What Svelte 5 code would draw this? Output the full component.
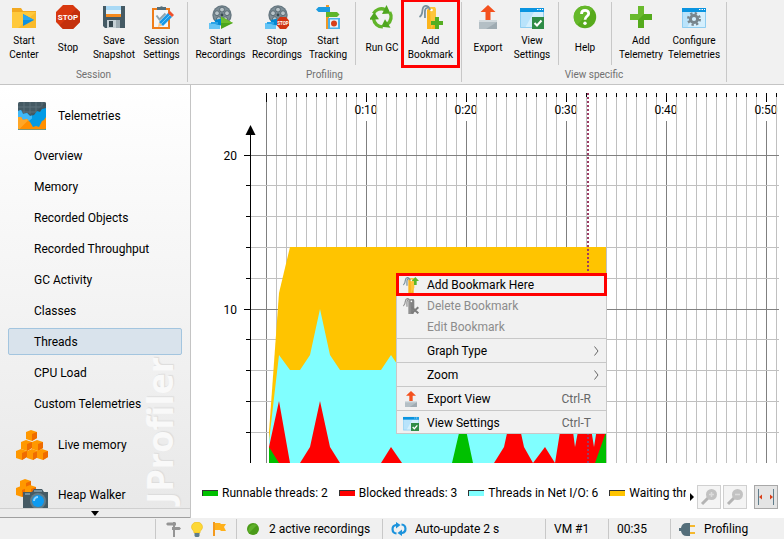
<script>
  const groups = [
    {
      label: 'Session',
      sets: [[
        { icon: 'folder', lines: ['Start', 'Center'], w: 48 },
        { icon: 'stop', lines: ['Stop'], w: 40 },
        { icon: 'save', lines: ['Save', 'Snapshot'], w: 52 },
        { icon: 'clipboard', lines: ['Session', 'Settings'], w: 43 },
      ]],
    },
    {
      label: 'Profiling',
      sets: [
        [
          { icon: 'reelplay', lines: ['Start', 'Recordings'], w: 57 },
          { icon: 'reelstop', lines: ['Stop', 'Recordings'], w: 56 },
          { icon: 'track', lines: ['Start', 'Tracking'], w: 46 },
        ],
        [
          { icon: 'recycle', lines: ['Run GC'], w: 44 },
          { icon: 'bookmark', lines: ['Add', 'Bookmark'], w: 53, marked: true },
        ],
      ],
    },
    {
      label: 'View specific',
      sets: [
        [
          { icon: 'export', lines: ['Export'], w: 44 },
          { icon: 'viewset', lines: ['View', 'Settings'], w: 44 },
        ],
        [{ icon: 'help', lines: ['Help'], w: 44 }],
        [
          { icon: 'plus', lines: ['Add', 'Telemetry'], w: 50 },
          { icon: 'config', lines: ['Configure', 'Telemetries'], w: 56 },
        ],
      ],
    },
  ];

  const views = ['Overview', 'Memory', 'Recorded Objects', 'Recorded Throughput', 'GC Activity', 'Classes', 'Threads', 'CPU Load', 'Custom Telemetries'];
  let selected = $state('Threads');

  const menu = [
    { label: 'Add Bookmark Here', icon: 'bookmarkup', marked: true },
    { label: 'Delete Bookmark', icon: 'bookmarkdel', disabled: true },
    { label: 'Edit Bookmark', disabled: true },
    { label: 'Graph Type', sub: true, sep: true },
    { label: 'Zoom', sub: true, sep: true },
    { label: 'Export View', icon: 'export', key: 'Ctrl-R', sep: true },
    { label: 'View Settings', icon: 'viewset', key: 'Ctrl-T', sep: true },
  ];

  const legend = [
    { label: 'Runnable threads: 2', color: '#00c000' },
    { label: 'Blocked threads: 3', color: '#ff0000' },
    { label: 'Threads in Net I/O: 6', color: '#80ffff' },
    { label: 'Waiting threads: 3', color: '#ffc400' },
  ];

  // Chart scale: ten pixels for each second, 15.4 pixels for each thread
  const originX = 75;
  const baseY = 378;
  let mainWidth = $state(593);
  const px = (s) => originX + s * 10;
  const py = (v) => Math.floor(baseY - v * 15.4);
  const seconds = $derived(Array.from({ length: Math.max(0, Math.floor((mainWidth - 5 - originX) / 10)) + 1 }, (_, i) => i));
  const levels = Array.from({ length: 10 }, (_, i) => (i + 1) * 2);
  const time = (s) => `${Math.floor(s / 60)}:${String(s % 60).padStart(2, '0')}`;
  const area = (pts) => `78,${baseY} ` + pts.map(([x, v]) => `${x},${py(v)}`).join(' ') + ` ${pts[pts.length - 1][0]},${baseY}`;

  const waiting = area([[78, 2], [88, 11], [99, 14], [415, 14]]);
  const netio = area([[78, 1.4], [88, 7], [99, 6], [109, 6], [119, 7], [129, 10], [139, 7], [149, 6], [190, 6], [200, 7], [210, 6], [415, 6]]);
  const blocked = area([[78, 1], [88, 4], [99, 0], [109, 0], [119, 1], [129, 4], [139, 1], [149, 0], [190, 0], [200, 1], [211, 0], [303, 0], [313, 1], [323, 4], [333, 1], [342, 0], [354, 1], [364, 0], [374, 4], [380, 3], [384, 1], [390, 3], [398, 3], [403, 1], [408, 3], [415, 5]]);
  const runnable = area([[78, 1], [88, 0], [261, 0], [272, 3], [282, 0], [404, 0], [415, 2]]);
</script>

{#snippet reel()}
  <circle cx="13" cy="10" r="9.7" fill="#667780" />
  <circle cx="13" cy="10" r="8.4" fill="#7c8d96" />
  {#each [[13, 4.6], [18, 8.2], [16.2, 14.2], [9.8, 14.2], [8, 8.2]] as [x, y]}
    <circle cx={x} cy={y} r="2.4" fill="#b9c4c9" stroke="#4d5d66" stroke-width=".8" />
  {/each}
  <circle cx="13" cy="10" r="1.4" fill="#37474f" />
  <path d="M0 18h11v6H0z" fill="#64c4f5" />
  <path d="M6 15l6-1.500v7L6 19z" fill="#0288d1" />
  <path d="M2 17h7v2H2z" fill="#29a4e8" />
{/snippet}

{#snippet win()}
  <path d="M0 3h24v20H0z" fill="#b9e3fb" />
  <path d="M14 7h10v16H5z" fill="#d5effd" />
  <path d="M.5 3.500h23v19H.5z" fill="none" stroke="#8fcdf0" />
  <path d="M0 3h24v4H0z" fill="#0a94e0" />
  <path d="M17 4.500h1.500M19.500 4.500H21M22 4.500h1" stroke="#fff" />
{/snippet}

{#snippet rings(c)}
  <path d="M11 5C9-1 4 0 3.500 5 3.300 9 2 11 .5 12M9 3C5 2 6 8 6 13" fill="none" stroke={c} stroke-width="1.800" />
{/snippet}

{#snippet icon(name, size)}
  <svg width={size} height={size} viewBox="0 0 24 24" aria-hidden="true">
    {#if name === 'folder'}
      <path d="M0 3h9l2 3h13v17H0z" fill="#f2a921" />
      <path d="M0 7h24v16H0z" fill="#ffc93c" />
      <path d="M24 7v16H6z" fill="#f9ba2b" />
      <path d="M11 9v12l11-6z" fill="#0d90df" />
      <path d="M11 9v6h11z" fill="#2aa6ee" />
    {:else if name === 'stop'}
      <path d="M7 0h10l7 7v10l-7 7H7l-7-7V7z" fill="#d8380f" />
      <path d="M24 7v10l-7 7H7l-3.500-3.500L20.500 3.500z" fill="#c4300c" />
      <text x="12" y="15" text-anchor="middle" font-size="8" font-weight="700" fill="#fff">STOP</text>
    {:else if name === 'save'}
      <path d="M1 1h22v22H3l-2-2z" fill="#455a64" />
      <path d="M4 1h15v11H4z" fill="#e2f2fb" />
      <path d="M4 1h15v4H4z" fill="#a9d9f5" />
      <path d="M4 9h15v3H4z" fill="#f58a1f" />
      <path d="M5 15h13v8H5z" fill="#c6d0d5" />
      <path d="M7 16h4v6H7z" fill="#37474f" />
      <path d="M14 15h4v8h-4z" fill="#9daab1" />
    {:else if name === 'clipboard'}
      <path d="M2 3h18v21H2z" fill="#ef7d1a" />
      <path d="M4 5h14v17H4z" fill="#f4f6f8" />
      <path d="M7 5V2h3a2 2 0 0 1 3 0h3v3z" fill="#546e7a" />
      <path d="M6.500 10.500l3 4 6-6" fill="none" stroke="#90a4ae" stroke-width="2" />
      <path d="M8 22l1-5 3.500 3.500z" fill="#f5c890" />
      <path d="M9 17L18 8l4 4-9 9z" fill="#1a98e5" />
      <path d="M18 8l2-2 4 4-2 2z" fill="#f0512c" />
      <path d="M11 19l9-9" stroke="#6cc5f7" />
    {:else if name === 'reelplay'}
      {@render reel()}
      <path d="M12 11.500v12.500l12-6z" fill="#4ca51b" />
      <path d="M12 11.500V18h12z" fill="#6bbd2c" />
    {:else if name === 'reelstop'}
      {@render reel()}
      <path d="M15 12h6l3 3.500v5L21 24h-6l-3-3.500v-5z" fill="#d03412" />
      <text x="18" y="20" text-anchor="middle" font-size="4.500" font-weight="700" fill="#fff">STOP</text>
    {:else if name === 'track'}
      <path d="M10 0h3v24h-3z" fill="#f09a25" />
      <path d="M0 4.500L2.500 2H14v5H2.500z" fill="#1c9be0" />
      <path d="M10 7h11l2.500 2.500L21 12H10z" fill="#5fb52a" />
      <path d="M12 13h12v11H12z" fill="#4ab2ea" />
      <path d="M14 14.500h8v8h-8z" fill="#e8f4fb" />
      <circle cx="18" cy="18.500" r="3" fill="#d9401b" />
    {:else if name === 'recycle'}
      {#each [0, 120, 240] as turn}
        <g transform="rotate({turn} 12 12.500)">
          <path d="M3.500 8.500A9 9 0 0 1 15 4.500" fill="none" stroke="#62b52a" stroke-width="3.400" />
          <path d="M16.500 0l4 8.500-8.500.5z" fill="#4fa61f" />
        </g>
      {/each}
    {:else if name === 'bookmark' || name === 'bookmarkup' || name === 'bookmarkdel'}
      {@const gray = name === 'bookmarkdel'}
      <path d="M8 5l3-3h5v22H8z" fill={gray ? '#909090' : '#fbb41c'} />
      <path d="M11 2h5l1 2v12l-5 8z" fill={gray ? '#828282' : '#fdc63c'} />
      <circle cx="12.500" cy="5" r="1.300" fill="#fff" />
      {@render rings(gray ? '#909090' : '#78909c')}
      {#if name === 'bookmark'}
        <path d="M16 12h4v4h4v4h-4v4h-4v-4h-4v-4h4z" fill="#55ae22" />
      {:else if name === 'bookmarkup'}
        <path d="M18.500 0L24 6h-3.500v6h-4V6H13z" fill="#5cb82a" />
      {:else}
        <path d="M13 14l10 9M23 14l-10 9" stroke="#7c7c7c" stroke-width="3" />
      {/if}
    {:else if name === 'export'}
      <path d="M3 15h18v9H3z" fill="#b4bfc5" />
      <path d="M3 15h18v2H3z" fill="#d4dbdf" />
      <path d="M21 17v7H10z" fill="#9fabb2" />
      <path d="M12 0l7.500 7H14.500v8h-5V7H4.500z" fill="#f4511e" />
    {:else if name === 'viewset'}
      {@render win()}
      <path d="M12 12h12v12H12z" fill="#2f8c46" />
      <path d="M14.500 18l2.500 2.500 4.500-5" fill="none" stroke="#fff" stroke-width="2" />
    {:else if name === 'config'}
      {@render win()}
      <g fill="none" stroke="#78858c">
        <circle cx="12" cy="14" r="5.800" stroke-width="2.400" stroke-dasharray="2.280" />
        <circle cx="12" cy="14" r="3.600" stroke-width="3" />
      </g>
    {:else if name === 'help'}
      <circle cx="12" cy="12" r="11.200" fill="#57aa1c" />
      <path d="M4 4a11.200 11.200 0 0 0 0 16L20 4A11.200 11.200 0 0 0 4 4z" fill="#65b82a" />
      <path d="M8.500 9c0-5 7.200-4.500 7.200-.5 0 2.800-3.700 2.800-3.700 6.300" fill="none" stroke="#fff" stroke-width="2.800" />
      <circle cx="12" cy="18.300" r="1.700" fill="#fff" />
    {:else if name === 'plus'}
      <path d="M9 1h6v8h8v6h-8v8H9v-8H1V9h8z" fill="#54aa1c" />
      <path d="M9 1h6v8l-6 6H1V9h8z" fill="#6aba2d" />
    {/if}
  </svg>
{/snippet}

{#snippet cube(x, y)}
  <path d="M{x} {y + 2}l5-2 6 2v6l-5 3-6-2z" fill="#ff9800" />
  <path d="M{x + 6} {y + 4}l5-2v6l-5 3z" fill="#ef6c00" />
{/snippet}

<div class="app">
  <header class="toolbar">
    {#each groups as group}
      <section class="group">
        <div class="sets">
          {#each group.sets as set}
            <div class="set">
              {#each set as tool}
                <button class="tool" class:marked={tool.marked} style="width: {tool.w}px">
                  {@render icon(tool.icon, 24)}
                  <span class="caption">{#each tool.lines as line}<span>{line}</span>{' '}{/each}</span>
                </button>
              {/each}
            </div>
          {/each}
        </div>
        <div class="group-label">{group.label}</div>
      </section>
    {/each}
  </header>

  <div class="body">
    <nav class="sidebar">
      <div class="scroll">
        <div class="watermark" aria-hidden="true">JProfiler</div>
        <a class="section" href="#telemetries">
          <svg width="32" height="30" viewBox="0 0 32 30" aria-hidden="true">
            <rect x="2" y="1" width="28" height="28" rx="1.500" fill="#455a64" />
            <path d="M2 6h28M2 11h28M8 1v12M14 1v12M20 1v12M26 1v12" stroke="#5c717b" />
            <path d="M30 1v14H16z" fill="#37474f" opacity=".5" />
            <path d="M2 10l3-1 2 4 4-1 3 3 4-1 3-4 3 1 2-3 4-1v22H2z" fill="#039be5" />
            <path d="M2 10l3-1 2 4 4-1 3 3 2-.5v3L8 24l-6 2z" fill="#40b8f7" />
            <path d="M2 16l3 0 2 3 4-1 3 3 3 5 3-1 3 1 3-6 2-1 2-3v11a1.500 1.500 0 0 1-1.500 1.500h-25A1.500 1.500 0 0 1 2 27.500z" fill="#ff8f00" />
            <path d="M2 16l3 0 2 3 4-1 1 1.500L3 28.500 2 27.500z" fill="#ffa726" />
          </svg>
          Telemetries
        </a>
        {#each views as view}
          <button class="view" class:selected={selected === view} onclick={() => (selected = view)}>{view}</button>
        {/each}
        <a class="section" href="#memory">
          <svg width="32" height="30" viewBox="0 0 32 30" aria-hidden="true">
            {@render cube(10, 0)}
            {@render cube(5, 10)}
            {@render cube(16, 10)}
            {@render cube(0, 19)}
            {@render cube(11, 19)}
            {@render cube(21, 19)}
          </svg>
          Live memory
        </a>
        <a class="section" href="#heap">
          <svg width="32" height="32" viewBox="0 0 32 32" aria-hidden="true">
            {@render cube(4, 0)}
            {@render cube(0, 7)}
            {@render cube(9, 6)}
            <path d="M7 13h9l2-3h8l2 3h4v19H7z" fill="#455a64" />
            <path d="M18 11h8v2h-8zM9 14h5v2H9z" fill="#78909c" />
            <circle cx="22" cy="22" r="8" fill="#607d8b" />
            <circle cx="22" cy="22" r="6" fill="#0d9af0" />
            <path d="M18 22a4 4 0 0 1 4-4" fill="none" stroke="#8fd4ff" stroke-width="2" />
          </svg>
          Heap Walker
        </a>
      </div>
      <button class="more" aria-label="Scroll down">
        <svg width="8" height="5" viewBox="0 0 8 5"><path d="M0 0h8L4 5z" /></svg>
      </button>
    </nav>

    <main bind:clientWidth={mainWidth}>
      <svg class="chart" role="img" aria-label="Threads over time">
        {#each seconds as s}
          {@const major = s % 10 === 0}
          <line x1={px(s) + 0.5} x2={px(s) + 0.5} y1={major && s > 0 ? 36 : 12} y2={baseY} stroke={major ? '#808080' : '#c0c0c0'} />
          <line x1={px(s) + 0.5} x2={px(s) + 0.5} y1="8" y2={major ? 17 : 12} stroke="#000" />
          {#if major && s > 0}
            <text x={px(s)} y="29" text-anchor="middle">{time(s)}</text>
          {/if}
        {/each}
        {#each levels as v}
          {@const major = v % 10 === 0}
          {#if v <= 20}
            <line x1="59" x2="100%" y1={py(v) + 0.5} y2={py(v) + 0.5} stroke={major ? '#808080' : '#c0c0c0'} />
            <line x1={major ? 53 : 55} x2="59" y1={py(v) + 0.5} y2={py(v) + 0.5} stroke="#000" />
            {#if major}
              <text x="46" y={py(v) + 5} text-anchor="end">{v}</text>
            {/if}
          {/if}
        {/each}
        <line x1="59.5" x2="59.5" y1="48" y2={baseY} stroke="#000" />
        <path d="M54.500 50l5-10 5 10z" />
        <polygon points={waiting} fill="#ffc400" />
        <polygon points={netio} fill="#80ffff" />
        <polygon points={blocked} fill="#ff0000" />
        <polygon points={runnable} fill="#00c000" />
        <line x1="397" x2="397" y1="8" y2={baseY} stroke="#9c3c64" stroke-width="2" stroke-dasharray="2 2" />
      </svg>

      <div class="menu" role="menu">
        {#each menu as item}
          {#if item.sep}<hr />{/if}
          <button role="menuitem" class:marked={item.marked} disabled={item.disabled}>
            <span class="slot">{#if item.icon}{@render icon(item.icon, 16)}{/if}</span>
            <span class="name">{item.label}</span>
            {#if item.key}<span class="key">{item.key}</span>{/if}
            {#if item.sub}
              <svg width="5" height="10" viewBox="0 0 5 10" aria-hidden="true"><path d="M.5 .5L4 5 .5 9.500" fill="none" stroke="#666" /></svg>
            {/if}
          </button>
        {/each}
      </div>

      <div class="legend">
        <div class="entries">
          {#each legend as entry}
            <span class="entry"><i style="background: {entry.color}"></i>{entry.label}</span>
          {/each}
        </div>
        <svg class="next" width="4" height="8" viewBox="0 0 4 8" aria-hidden="true"><path d="M0 0l4 4-4 4z" /></svg>
        <div class="zoom">
          {#each ['in', 'out'] as dir}
            <button disabled aria-label="Zoom {dir}">
              <svg width="18" height="18" viewBox="0 0 18 18">
                <path d="M2 16l7-7" stroke="#b4b4b4" stroke-width="3" />
                <circle cx="11.500" cy="6.500" r="5.500" fill="#c2c2c2" />
                <path d={dir === 'in' ? 'M9 6.500h5M11.500 4v5' : 'M9 6.500h5'} stroke="#dcdcdc" stroke-width="1.500" />
              </svg>
            </button>
          {/each}
        </div>
        <button class="fit" aria-label="Fit to window">
          <svg width="18" height="16" viewBox="0 0 18 16">
            <path d="M1.500 0v16M16.500 0v16" stroke="#607d8b" />
            <path d="M2 8l3-2.500v5zM16 8l-3-2.500v5z" fill="#d9401b" />
          </svg>
        </button>
      </div>
    </main>
  </div>

  <footer class="status">
    <div></div>
    <div class="icons">
      <svg width="15" height="15" viewBox="0 0 15 15" aria-hidden="true"><path d="M7 0h2v15H7zM0 2l1.500-1.500H10v3H1.500zM6 5h7.500L15 6.500 13.500 8H6z" fill="#949494" /></svg>
      <svg width="12" height="15" viewBox="0 0 12 15" aria-hidden="true"><path d="M3 11C3 8 .5 8 .5 5a5.500 5 0 0 1 11 0c0 3-2.500 3-2.500 6z" fill="#fdd835" stroke="#eab308" stroke-width=".5" /><path d="M3.500 11h5v3l-1 1h-3l-1-1z" fill="#607d8b" /></svg>
      <svg width="14" height="14" viewBox="0 0 14 14" aria-hidden="true"><path d="M0 0h2v14H0z" fill="#f39a1e" /><path d="M2 1h5l1 1h5l-2 3 2 4H8L7 8H2z" fill="#ffb11b" /></svg>
    </div>
    <div>
      <svg width="12" height="12" viewBox="0 0 12 12" aria-hidden="true"><circle cx="6" cy="6" r="6" fill="#4a9a18" /><path d="M2 10A6 6 0 0 1 10 2z" fill="#5fb02a" /></svg>
      <span class="first">2 active recordings</span>
    </div>
    <div class="tight">
      <svg width="16" height="14" viewBox="0 0 16 14" aria-hidden="true">
        <path d="M5.500 11.500A4.300 4.300 0 0 1 5 3h1M10.500 2.500A4.300 4.300 0 0 1 11 11h-1" fill="none" stroke="#1c93dc" stroke-width="2.200" />
        <path d="M5 0l4.500 3L5 6.500zM11 7.500L6.500 11l4.500 3z" fill="#1c93dc" />
      </svg>
      <span>Auto-update 2 s</span>
    </div>
    <div class="tight"><span>VM #1</span></div>
    <div class="tight"><span>00:35</span></div>
    <div class="tight">
      <svg width="17" height="13" viewBox="0 0 17 13" aria-hidden="true"><path d="M0 5h2a6 6 0 0 1 6-5h3v13H8a6 6 0 0 1-6-5H0z" fill="#546e7a" /><path d="M11 3h5M11 10h5" stroke="#f5b82e" stroke-width="2" /></svg>
      <span>Profiling</span>
    </div>
  </footer>
</div>

<style>
  :global(body) { margin: 0; }
  .app {
    display: flex;
    flex-direction: column;
    height: 100vh;
    overflow: hidden;
    background: #f0f0f0;
    color: #000;
    font: 12px/16px Roboto, "Open Sans", sans-serif;
  }
  button {
    margin: 0;
    padding: 0;
    border: 0;
    background: none;
    color: inherit;
    font: inherit;
  }
  svg { display: block; flex: none; }

  .toolbar {
    display: flex;
    flex: none;
    padding: 2px 0;
    border-bottom: 1px solid #c4c4c4;
    background: #f1f1f1;
  }
  .group { border-right: 1px solid #c8c8c8; }
  .sets, .set { display: flex; }
  .set { padding: 0 4px; height: 63px; }
  .group:first-child .set { padding-left: 0; }
  .set + .set { border-left: 1px solid #c8c8c8; }
  .tool {
    display: flex;
    flex-direction: column;
    align-items: center;
    gap: 5px;
    padding-top: 3px;
    white-space: nowrap;
    font-size: 10px;
    line-height: 14px;
  }
  .caption {
    display: flex;
    flex-direction: column;
    justify-content: center;
    align-items: center;
    height: 28px;
  }
  .tool.marked { outline: 3px solid #f00; }
  .group-label {
    height: 17px;
    line-height: 20px;
    font-size: 10px;
    color: #707070;
    text-align: center;
  }

  .body { display: flex; flex: 1; min-height: 0; }
  .sidebar {
    display: flex;
    flex-direction: column;
    width: 190px;
    flex: none;
    border-right: 1px solid #c4c4c4;
    background: linear-gradient(#fff, #e8e8e8);
  }
  .scroll {
    position: relative;
    flex: 1;
    min-height: 0;
    overflow: hidden;
    padding: 5px 8px 0;
  }
  .watermark {
    position: absolute;
    right: 6px;
    bottom: 4px;
    writing-mode: vertical-rl;
    transform: rotate(180deg);
    font-family: "Open Sans", sans-serif;
    font-size: 36px;
    line-height: 48px;
    font-weight: 700;
    color: #f9f9f9;
    text-shadow: 1px 1px 1px #dcdcdc;
  }
  .section {
    position: relative;
    display: flex;
    align-items: center;
    gap: 10px;
    box-sizing: border-box;
    height: 50px;
    padding: 2px 0 0 8px;
    color: inherit;
    text-decoration: none;
  }
  .view {
    position: relative;
    display: block;
    box-sizing: border-box;
    width: 100%;
    height: 27px;
    margin: 0 0 4px;
    padding-left: 25px;
    border: 1px solid transparent;
    border-radius: 2px;
    text-align: left;
  }
  .section + .view { margin-top: 2px; }
  .view:nth-last-of-type(1) { margin-bottom: 2px; }
  .view.selected { border-color: #a3c5df; background: #d9e3ec; }
  .more {
    display: flex;
    justify-content: center;
    align-items: center;
    height: 10px;
    border-top: 1px solid #d0d0d0;
    border-bottom: 1px solid #a0a0a0;
    background: #ececec;
  }

  main {
    position: relative;
    display: flex;
    flex-direction: column;
    flex: 1;
    min-width: 0;
    padding-right: 5px;
    background: #fff;
  }
  .chart { width: 100%; height: 378px; overflow: visible; }
  .chart text { font-size: 12px; }

  .menu {
    position: absolute;
    left: 205px;
    top: 188px;
    width: 209px;
    border: 1px solid #c8c8c8;
    background: #f1f1f1;
  }
  .menu hr { margin: 1px 0; border: 0; border-top: 1px solid #c8c8c8; }
  .menu button {
    display: flex;
    align-items: center;
    width: 100%;
    height: 21px;
    padding: 0 7px 0 6px;
    text-align: left;
  }
  .menu button.marked { outline: 3px solid #f00; outline-offset: -2px; }
  .menu button:disabled { color: #8c8c8c; }
  .slot { width: 24px; }
  .name { flex: 1; }
  .key { color: #666; padding-right: 8px; }

  .legend { display: flex; align-items: center; padding: 22px 1px 0 11px; }
  .entries { display: flex; flex: 1; gap: 11px; min-width: 0; overflow: hidden; margin-bottom: 8px; white-space: nowrap; }
  .entry { display: flex; align-items: center; gap: 4px; }
  .entry i { box-sizing: border-box; width: 16px; height: 6px; border: solid #333; border-width: 1px 0 0 1px; }
  .next { margin: 0 3px 0 4px; }
  .zoom { display: flex; gap: 2px; margin-right: 7px; }
  .legend button {
    display: flex;
    justify-content: center;
    align-items: center;
    box-sizing: border-box;
    width: 24px;
    height: 24px;
    border: 1px solid #d0d0d0;
    background: #f4f4f4;
  }
  .legend .fit { border-color: #a8a8a8; background: #e4e4e4; }

  .status {
    display: grid;
    grid-template-columns: 155px 81px 146px 163px 63px 62px 1fr;
    flex: none;
    height: 20px;
    padding-top: 1px;
    white-space: nowrap;
  }
  .status > div { display: flex; align-items: center; gap: 10px; padding-left: 10px; border-left: 1px solid #c8c8c8; }
  .status > div:first-child { border: 0; }
  .status > .tight { gap: 8px; padding-left: 8px; }
</style>
